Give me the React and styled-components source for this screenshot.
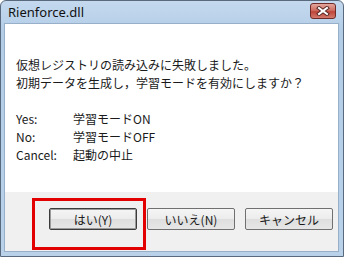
import React from "react";
import styled, { createGlobalStyle } from "styled-components";

const GlobalStyle = createGlobalStyle`
  html, body {
    margin: 0;
    padding: 0;
    background: #ffffff;
  }
  body {
    font-family: "Noto Sans CJK JP", "Noto Sans", sans-serif;
  }
`;

const Frame = styled.div`
  width: 344px;
  height: 257px;
  box-sizing: border-box;
  border: 1px solid #5a6a7e;
  border-radius: 6px 6px 0 0;
  background: linear-gradient(#c4d9ee, #b3cde7 12%, #b9d2ea);
  padding: 0 4px 4px 3px;
  display: flex;
  flex-direction: column;
`;

const TitleBar = styled.div`
  height: 22px;
  display: flex;
  align-items: center;
  justify-content: space-between;
  padding: 0 3px 0 4px;
`;

const Title = styled.span`
  font-family: "Noto Sans", sans-serif;
  font-size: 13px;
  color: #111;
  margin-top: -1px;
`;

const CloseButton = styled.div`
  width: 26px;
  height: 16px;
  box-sizing: border-box;
  border: 1px solid #6e2b27;
  border-radius: 3px;
  background: linear-gradient(#e4a69c, #cf6e62 45%, #c0453a 55%, #d27a6c);
  display: flex;
  align-items: center;
  justify-content: center;
  margin-top: -2px;
`;

const Client = styled.div`
  flex: 1;
  display: flex;
  flex-direction: column;
  border: 1px solid #97afc8;
  background: #ffffff;
`;

const Message = styled.div`
  flex: 1;
  padding: 32px 10px 0 11px;
  font-size: 12px;
  line-height: 18px;
  color: #1a1a1a;
`;

const Line = styled.div`
  height: 18px;
  white-space: nowrap;
`;

const Row = styled.div`
  display: flex;
  height: 18px;
  white-space: nowrap;
`;

const Key = styled.span`
  width: 57px;
`;

const Footer = styled.div`
  position: relative;
  height: 59px;
  background: #f0f0f0;
  display: flex;
  justify-content: flex-end;
  gap: 10px;
  padding: 16px 5px 0 0;
  box-sizing: border-box;
`;

const Button = styled.div`
  width: 88px;
  height: 22px;
  box-sizing: border-box;
  border: 1px solid ${(p) => (p.$focused ? "#3c3c3c" : "#707070")};
  box-shadow: ${(p) => (p.$focused ? "inset 0 0 0 1px #9a9a9a" : "none")};
  border-radius: 2px;
  background: linear-gradient(#f5f5f5, #ececec 50%, #dedede 51%, #e6e6e6);
  font-size: 12px;
  color: #1a1a1a;
  display: flex;
  align-items: center;
  justify-content: center;
`;

const Highlight = styled.div`
  position: absolute;
  left: 27px;
  top: 6px;
  width: 114px;
  height: 52px;
  box-sizing: border-box;
  border: 3px solid #e30000;
`;

export default function App() {
  return (
    <>
      <GlobalStyle />
      <Frame>
        <TitleBar>
          <Title>Rienforce.dll</Title>
          <CloseButton>
            <svg width="14" height="10" viewBox="0 0 14 10">
              <path d="M3 2 L11 8 M11 2 L3 8" stroke="#5a2a26" strokeWidth="4" strokeLinecap="square" />
              <path d="M3 2 L11 8 M11 2 L3 8" stroke="#ffffff" strokeWidth="2" strokeLinecap="square" />
            </svg>
          </CloseButton>
        </TitleBar>
        <Client>
          <Message>
            <Line>仮想レジストリの読み込みに失敗しました。</Line>
            <Line>初期データを生成し，学習モードを有効にしますか？</Line>
            <Line />
            <Row><Key>Yes:</Key><span>学習モードON</span></Row>
            <Row><Key>No:</Key><span>学習モードOFF</span></Row>
            <Row><Key>Cancel:</Key><span>起動の中止</span></Row>
          </Message>
          <Footer>
            <Button $focused>はい(Y)</Button>
            <Button>いいえ(N)</Button>
            <Button>キャンセル</Button>
            <Highlight />
          </Footer>
        </Client>
      </Frame>
    </>
  );
}
